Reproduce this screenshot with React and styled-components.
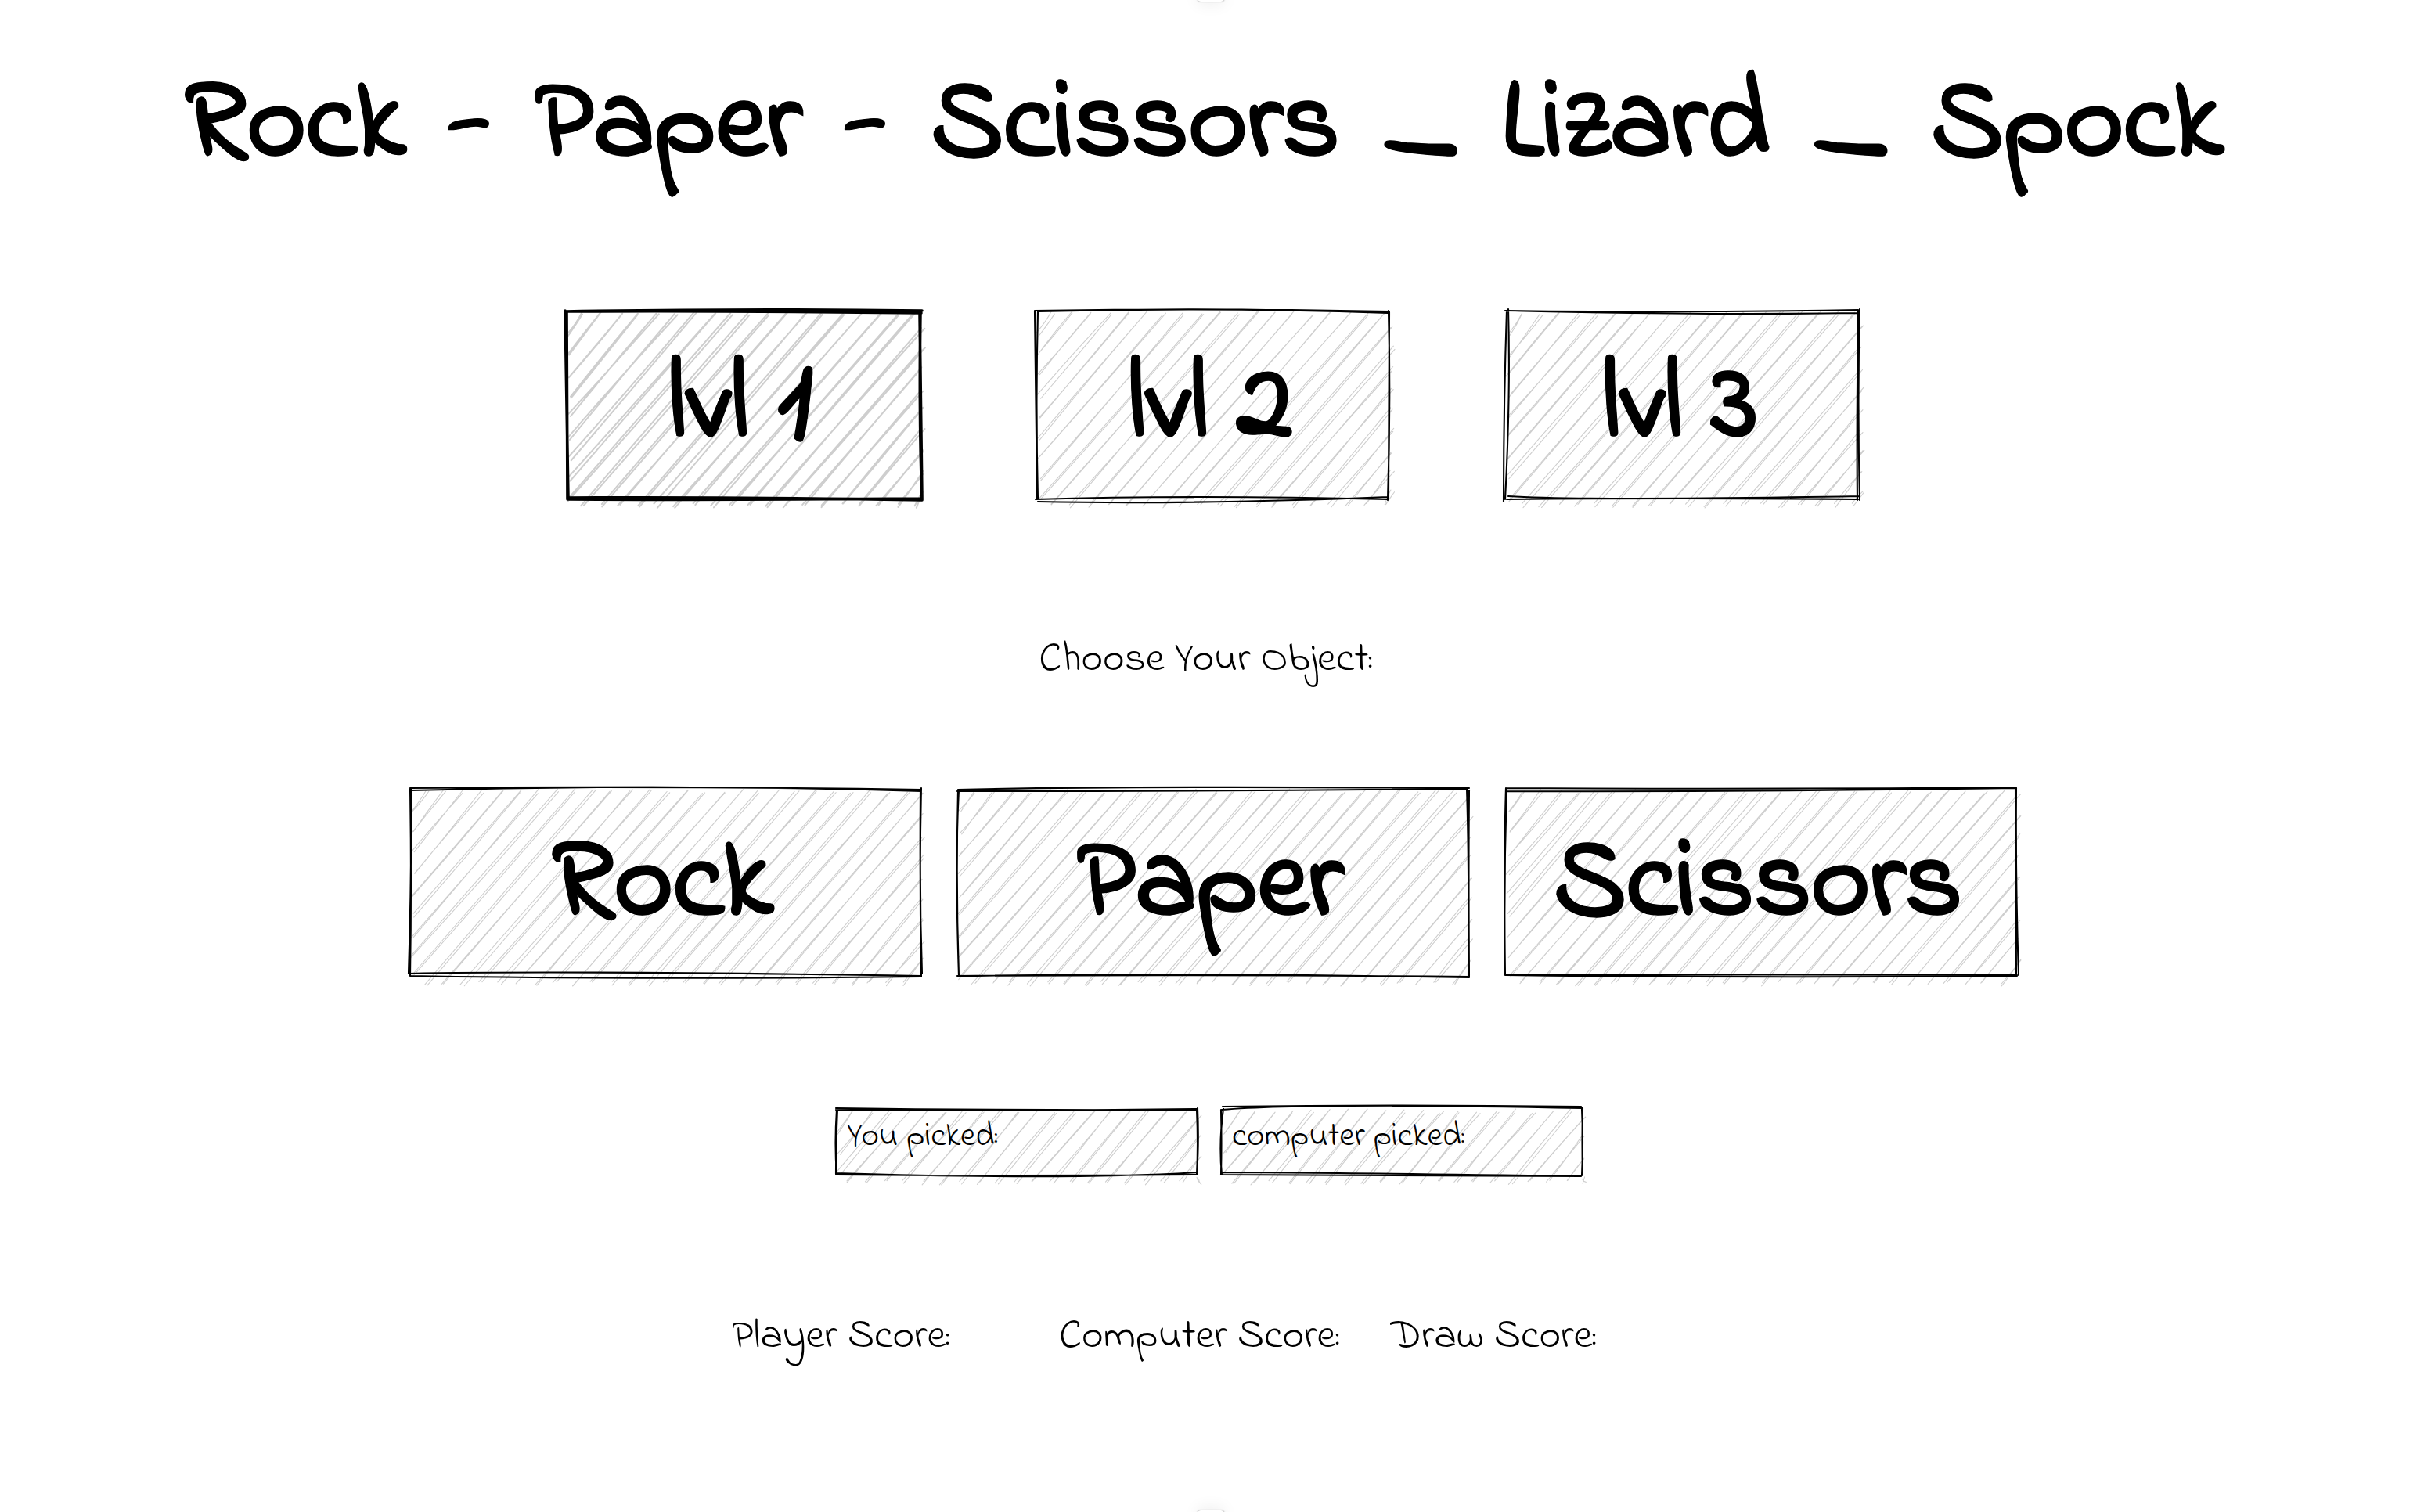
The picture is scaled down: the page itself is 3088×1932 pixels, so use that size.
import React, { useState } from "react";
import styled, { createGlobalStyle } from "styled-components";

const GlobalStyle = createGlobalStyle`
  *, *::before, *::after { box-sizing: border-box; }
  body {
    margin: 0;
    background: #fff;
    color: #000;
    font-family: "Indie Flower", Lato, "Open Sans", sans-serif;
  }
`;

const Page = styled.main`
  position: relative;
  display: flex;
  flex-direction: column;
  align-items: center;
  gap: 168px;
  min-height: 100vh;
  padding: 80px 24px 0 36px;
  overflow: hidden;
`;

const Nub = styled.span`
  position: absolute;
  left: 50%;
  ${(p) => p.$edge}: -6px;
  width: 34px;
  height: 8px;
  margin-left: -14px;
  border-radius: 8px;
  background: #fff;
  box-shadow: 0 0 2px rgba(0, 0, 0, 0.5), 0 0 20px rgba(0, 0, 0, 0.14);
`;

const Header = styled.header`
  display: flex;
  flex-direction: column;
  align-items: center;
  gap: 153px;
  width: 100%;
`;

const Title = styled.h1`
  display: flex;
  justify-content: space-between;
  width: 100%;
  max-width: 2604px;
  margin: 0 24px 0 0;
  font-size: 144px;
  line-height: 164px;
  font-weight: 700;
  -webkit-text-stroke: 1px #000;
`;

const Row = styled.div`
  display: grid;
  grid-template-columns: repeat(${(p) => p.$columns}, 1fr);
  gap: ${(p) => p.$gap}px;
  width: 100%;
  max-width: ${(p) => p.$max}px;
`;

const Picks = styled(Row)`
  margin-right: 10px;
`;

const Chooser = styled.section`
  display: flex;
  flex-direction: column;
  align-items: center;
  gap: 126px;
  width: 100%;
`;

const Prompt = styled.h2`
  margin: 0 20px 0 0;
  font-size: 53px;
  line-height: 76px;
  font-weight: 400;
`;

const SketchButton = styled.button`
  position: relative;
  height: 241px;
  padding: 6px 8px 0 0;
  border: 0;
  background: none;
  color: inherit;
  font-family: inherit;
  font-size: 144px;
  line-height: 164px;
  font-weight: 700;
  -webkit-text-stroke: 1px #000;
  cursor: pointer;
`;

const Label = styled.span`
  position: relative;
`;

const Panel = styled.div`
  position: relative;
  height: 86px;
  padding: 12px 14px;
  font-size: 43px;
  line-height: 48px;
`;

const Drawing = styled.svg`
  position: absolute;
  inset: 0;
  width: 100%;
  height: 100%;
  overflow: visible;
  pointer-events: none;
  fill: none;
  stroke-linecap: round;
`;

const Scores = styled.section`
  display: grid;
  grid-template-columns: 418px 424px 268px;
  margin-right: 120px;
  font-size: 53px;
  line-height: 76px;
`;

const Score = styled.p`
  margin: 0;
  white-space: nowrap;
`;

function randomFrom(seed) {
  let s = seed;
  return () => {
    s = (s * 16807) % 2147483647;
    return s / 2147483647;
  };
}

/* Doubled, slightly wandering diagonal strokes that fill a w x h rectangle. */
function hachure(w, h, seed) {
  const rand = randomFrom(seed * 7919 + 13);
  const wobble = (n) => (rand() * 2 - 1) * n;
  const slope = 0.9;
  const strokes = [];
  for (let x = 20; x < w + h * slope; x += 23.6) {
    const over = Math.max(0, x - w);
    const x1 = Math.min(x, w);
    const y1 = over / slope;
    const x2 = Math.max(0, x - h * slope);
    const y2 = Math.min(h, x / slope);
    for (let pass = 0; pass < 2; pass += 1) {
      const ax = x1 + 2 + wobble(3);
      const ay = y1 + 3 + wobble(3);
      const bx = x2 + 3 + wobble(3);
      const by = y2 + 8 + wobble(3);
      const mx = (ax + bx) / 2 + wobble(2);
      const my = (ay + by) / 2 + wobble(2);
      strokes.push(`M${ax} ${ay}Q${mx} ${my} ${bx} ${by}`);
    }
  }
  return strokes.join("");
}

function Sketch({ w, h, seed, outline, bold }) {
  return (
    <Drawing viewBox={`0 0 ${w} ${h}`} preserveAspectRatio="none" aria-hidden="true">
      <path d={hachure(w, h, seed)} stroke="#cecece" strokeWidth={bold ? 2 : 1.1} />
      <path d={outline} stroke="#000" strokeWidth={bold ? 3.6 : 2.1} />
    </Drawing>
  );
}

const levels = [
  {
    name: "lvl 1",
    outline:
      "M-2 1Q226 0 452 3M-1 1Q226 -3 453 0M-2 0Q0 120 2 240M0 1Q1 120 1 240M450 2Q451 120 453 240M451 1Q449 140 453 241M1 238Q226 237 453 241M3 240Q226 241 453 239",
  },
  {
    name: "lvl 2",
    outline:
      "M-2 0Q226 -4 450 1M2 1Q226 -5 448 3M-2 0Q-1 120 1 240M2 1Q-1 120 2 240M449 0Q452 120 448 241M450 2Q450 120 449 238M-1 240Q200 234 448 240M2 243Q200 247 448 237",
  },
  {
    name: "lvl 3",
    outline:
      "M-1 0Q226 3 449 -1M1 0Q250 6 449 3M1 0Q-3 120 -3 243M3 -2Q6 110 -1 240M451 -2Q448 120 451 241M449 0Q447 150 448 241M3 236Q100 242 451 236M1 240Q226 238 449 240",
  },
];

const objects = [
  {
    name: "Rock",
    outline:
      "M0 -1Q326 -4 653 1M0 2Q326 -7 653 3M1 0Q2 110 -2 235M0 0Q2 120 0 238M653 -1Q650 120 654 235M652 1Q651 120 653 239M-2 235Q200 231 653 238M0 238Q300 243 653 239",
  },
  {
    name: "Paper",
    outline:
      "M0 1Q200 -4 653 -1M-1 3Q326 3 650 0M1 2Q-4 90 1 238M0 3Q-3 120 1 238M650 0Q653 90 652 240M653 2Q652 100 653 240M-1 238Q326 234 653 240M0 238Q326 236 653 239",
  },
  {
    name: "Scissors",
    outline:
      "M0 -1Q326 1 652 -2M1 3Q326 4 652 -1M0 -1Q-3 90 -1 237M1 0Q-3 120 -1 237M652 -1Q651 120 655 237M651 1Q651 120 652 238M0 236Q326 236 653 237M0 237Q326 241 653 238",
  },
];

const picks = [
  {
    name: "You picked:",
    outline:
      "M0 -1Q231 2 462 1M0 1Q231 3 462 0M1 1Q-2 45 1 84M2 0Q0 45 0 83M462 -1Q464 45 461 82M461 1Q463 45 461 84M0 82Q300 91 462 81M0 84Q231 86 461 84",
  },
  {
    name: "computer picked:",
    outline:
      "M2 -3Q231 -6 460 -3M1 1Q100 -8 462 -1M3 0Q-3 43 1 84M0 1Q1 43 0 84M462 -1Q461 43 462 84M461 0Q463 43 461 85M0 81Q120 81 460 86M0 84Q231 86 460 86",
  },
];

const titleWords = ["Rock", "-", "Paper", "-", "Scissors", "_", "Lizard", "_", "Spock"];

export default function App() {
  const [level, setLevel] = useState(0);
  return (
    <Page>
      <GlobalStyle />
      <Nub $edge="top" />
      <Header>
        <Title>
          {titleWords.map((word, i) => (
            <span key={i}>{word}</span>
          ))}
        </Title>
        <Row $columns={3} $gap={147} $max={1653}>
          {levels.map((item, i) => (
            <SketchButton
              key={item.name}
              type="button"
              aria-pressed={level === i}
              onClick={() => setLevel(i)}
            >
              <Sketch w={452} h={240} seed={i + 1} outline={item.outline} bold={level === i} />
              <Label>{item.name}</Label>
            </SketchButton>
          ))}
        </Row>
      </Header>
      <Chooser>
        <Prompt>Choose Your Object:</Prompt>
        <Row $columns={3} $gap={47} $max={2053}>
          {objects.map((item, i) => (
            <SketchButton key={item.name} type="button">
              <Sketch w={653} h={240} seed={i + 4} outline={item.outline} />
              <Label>{item.name}</Label>
            </SketchButton>
          ))}
        </Row>
      </Chooser>
      <Picks $columns={2} $gap={30} $max={954}>
        {picks.map((item, i) => (
          <Panel key={item.name}>
            <Sketch w={462} h={86} seed={i + 7} outline={item.outline} />
            <Label>{item.name}</Label>
          </Panel>
        ))}
      </Picks>
      <Scores>
        <Score>Player Score:</Score>
        <Score>Computer Score:</Score>
        <Score>Draw Score:</Score>
      </Scores>
      <Nub $edge="bottom" />
    </Page>
  );
}
